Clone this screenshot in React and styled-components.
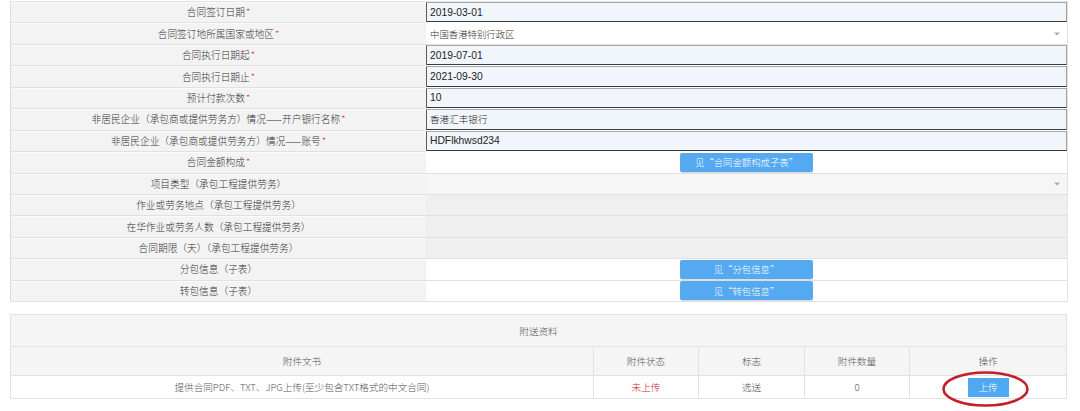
import React from "react";
import styled, { createGlobalStyle } from "styled-components";

const Global = createGlobalStyle`
  html, body { margin: 0; padding: 0; background: #fff; }
  body { font-family: "Microsoft YaHei", "Noto Sans CJK SC", "Liberation Sans", sans-serif; }
`;

const Page = styled.div`
  width: 1080px;
  height: 411px;
  overflow: hidden;
  padding: 1px 0 0 10px;
  box-sizing: border-box;
  background: #fff;
`;

const FormTable = styled.div`
  width: 1057px;
  display: grid;
  grid-template-columns: 415px 642px;
  grid-auto-rows: 21.45px;
  border-left: 1px solid #dcdcdc;
  border-top: 1px solid #e2e2e2;
`;

const Label = styled.div`
  background: #f3f3f3;
  border-bottom: 1px solid #e1e1e1;
  box-shadow: inset 0 1px 0 #fbfbfb;
  display: flex;
  align-items: center;
  justify-content: center;
  font-size: 9.7px;
  font-weight: 300;
  color: #333;
  white-space: nowrap;
`;

const Star = styled.span`
  color: #e0302a;
  margin-left: 1px;
`;

const Value = styled.div`
  display: flex;
  align-items: center;
  justify-content: ${(p) => (p.$center ? "center" : "flex-start")};
  position: relative;
  border-bottom: 1px solid ${(p) => (p.$input ? "transparent" : "#e1e1e1")};
  border-right: 1px solid #e4e4e4;
  background: ${(p) =>
    p.$tone === "gray" ? "#efefef" : p.$tone === "light" ? "#f6f6f6" : "#fff"};
  box-sizing: border-box;
`;

const Input = styled.div`
  flex: 1;
  align-self: stretch;
  background: #f1f6fd;
  border-top: 1px solid #a8a8a8;
  border-left: 1px solid #5c5c5c;
  border-bottom: 1px solid #3a3a3a;
  border-right: 1px solid #a0a0a0;
  display: flex;
  align-items: center;
  padding-left: 3px;
  font-family: "Liberation Sans", "Noto Sans CJK SC", sans-serif;
  font-size: 10.3px;
  color: #222;
  box-sizing: border-box;
`;

const CjkText = styled.span`
  font-family: "Noto Sans CJK SC", sans-serif;
  font-size: 9.6px;
  font-weight: 300;
`;

const SelectText = styled.span`
  padding-left: 4px;
  font-size: 9.4px;
  font-weight: 300;
  color: #333;
`;

const Arrow = styled.span`
  position: absolute;
  right: 7px;
  top: 50%;
  transform: translateY(-50%);
  width: 0;
  height: 0;
  border-left: 3px solid transparent;
  border-right: 3px solid transparent;
  border-top: 3px solid #aaa;
`;

const BlueButton = styled.div`
  width: 133px;
  height: 19px;
  background: #54a9f0;
  color: #fff;
  font-size: 9.4px;
  font-weight: 300;
  display: flex;
  align-items: center;
  justify-content: center;
  border-radius: 2px;
  box-shadow: 0 1px 1px rgba(0, 0, 0, 0.15);
`;

const AttachTable = styled.div`
  margin-top: 12px;
  width: 1057px;
  box-sizing: border-box;
  border: 1px solid #e2e2e2;
  display: grid;
  grid-template-columns: 582px 105px 106px 105px 1fr;
  font-size: 9.6px;
  font-weight: 300;
  color: #555;
`;

const TitleCell = styled.div`
  grid-column: 1 / -1;
  height: 31px;
  background: #f5f5f5;
  border-bottom: 1px solid #e2e2e2;
  display: flex;
  align-items: center;
  justify-content: center;
`;

const Cell = styled.div`
  height: ${(p) => (p.$head ? "28px" : "22px")};
  background: ${(p) => (p.$head ? "#f5f5f5" : "#fff")};
  border-bottom: ${(p) => (p.$head ? "1px solid #e2e2e2" : "none")};
  border-left: ${(p) => (p.$first ? "none" : "1px solid #e2e2e2")};
  display: flex;
  align-items: center;
  justify-content: center;
  color: ${(p) => (p.$red ? "#c8262c" : "#555")};
  position: relative;
`;

const UploadButton = styled.div`
  width: 41px;
  height: 19px;
  background: #4fa9f1;
  color: #fff;
  display: flex;
  align-items: center;
  justify-content: center;
`;

const Ring = styled.svg`
  position: absolute;
  left: 31px;
  top: -6px;
  width: 89px;
  height: 38px;
  pointer-events: none;
`;

const rows = [
  { label: "合同签订日期", req: true, kind: "input", value: "2019-03-01" },
  { label: "合同签订地所属国家或地区", req: true, kind: "select", value: "中国香港特别行政区" },
  { label: "合同执行日期起", req: true, kind: "input", value: "2019-07-01" },
  { label: "合同执行日期止", req: true, kind: "input", value: "2021-09-30" },
  { label: "预计付款次数", req: true, kind: "input", value: "10" },
  { label: "非居民企业（承包商或提供劳务方）情况——开户银行名称", req: true, kind: "input", value: "香港汇丰银行", cjk: true },
  { label: "非居民企业（承包商或提供劳务方）情况——账号", req: true, kind: "input", value: "HDFlkhwsd234" },
  { label: "合同金额构成", req: true, kind: "button", value: "见“合同金额构成子表”" },
  { label: "项目类型（承包工程提供劳务）", kind: "select", tone: "light", value: "" },
  { label: "作业或劳务地点（承包工程提供劳务）", kind: "empty", tone: "gray" },
  { label: "在华作业或劳务人数（承包工程提供劳务）", kind: "empty", tone: "gray" },
  { label: "合同期限（天）（承包工程提供劳务）", kind: "empty", tone: "gray" },
  { label: "分包信息（子表）", kind: "button", value: "见“分包信息”" },
  { label: "转包信息（子表）", kind: "button", value: "见“转包信息”" },
];

function ValueCell({ row }) {
  if (row.kind === "input") {
    return (
      <Value $input>
        <Input>{row.cjk ? <CjkText>{row.value}</CjkText> : row.value}</Input>
      </Value>
    );
  }
  if (row.kind === "select") {
    return (
      <Value $tone={row.tone}>
        <SelectText>{row.value}</SelectText>
        <Arrow />
      </Value>
    );
  }
  if (row.kind === "button") {
    return (
      <Value $center>
        <BlueButton>{row.value}</BlueButton>
      </Value>
    );
  }
  return <Value $tone={row.tone} />;
}

export default function App() {
  return (
    <>
      <Global />
      <Page>
        <FormTable>
          {rows.map((r, i) => (
            <React.Fragment key={i}>
              <Label>
                {r.label}
                {r.req && <Star>*</Star>}
              </Label>
              <ValueCell row={r} />
            </React.Fragment>
          ))}
        </FormTable>

        <AttachTable>
          <TitleCell>附送资料</TitleCell>
          <Cell $head $first>附件文书</Cell>
          <Cell $head>附件状态</Cell>
          <Cell $head>标志</Cell>
          <Cell $head>附件数量</Cell>
          <Cell $head>操作</Cell>
          <Cell $first>提供合同PDF、TXT、JPG上传(至少包含TXT格式的中文合同)</Cell>
          <Cell $red>未上传</Cell>
          <Cell>选送</Cell>
          <Cell>0</Cell>
          <Cell>
            <UploadButton>上传</UploadButton>
            <Ring viewBox="0 0 89 38">
              <ellipse cx="44.5" cy="19" rx="42" ry="16.5" fill="none" stroke="#c4202b" strokeWidth="2.6" />
            </Ring>
          </Cell>
        </AttachTable>
      </Page>
    </>
  );
}
